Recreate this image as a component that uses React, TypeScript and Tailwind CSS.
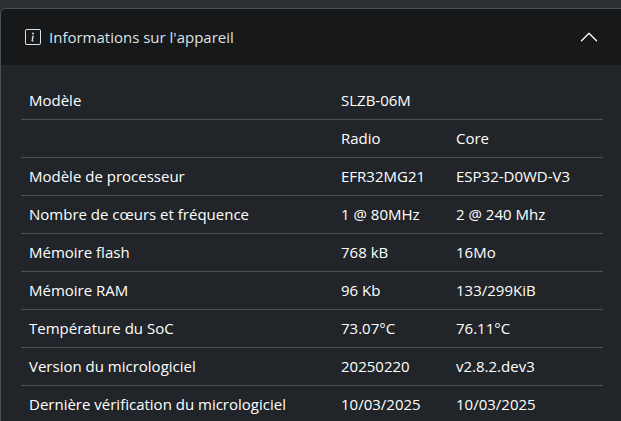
import { BsChevronUp, BsInfoSquare } from "react-icons/bs";

interface DeviceRow {
  label: string;
  radio: string;
  core: string;
}

const rows: DeviceRow[] = [
  { label: "Modèle", radio: "SLZB-06M", core: "" },
  { label: "", radio: "Radio", core: "Core" },
  { label: "Modèle de processeur", radio: "EFR32MG21", core: "ESP32-D0WD-V3" },
  { label: "Nombre de cœurs et fréquence", radio: "1 @ 80MHz", core: "2 @ 240 Mhz" },
  { label: "Mémoire flash", radio: "768 kB", core: "16Mo" },
  { label: "Mémoire RAM", radio: "96 Kb", core: "133/299KiB" },
  { label: "Température du SoC", radio: "73.07°C", core: "76.11°C" },
  { label: "Version du micrologiciel", radio: "20250220", core: "v2.8.2.dev3" },
  { label: "Dernière vérification du micrologiciel", radio: "10/03/2025", core: "10/03/2025" },
];

export default function App() {
  return (
    <main className="min-h-screen bg-[#2b3035] pt-2 font-['Open_Sans','Noto_Sans',sans-serif] text-[15px] text-white">
      <section className="overflow-hidden rounded-tl-md border-t border-l border-[#495057] bg-[#212529]">
        <h2>
          <button type="button" aria-expanded="true" className="flex h-14 w-full items-center gap-2 bg-[#16181a] pr-[22px] pl-6 text-left text-[#dee2e6]">
            <BsInfoSquare className="size-4" />
            <span className="flex-1">Informations sur l'appareil</span>
            <BsChevronUp className="size-5 text-white" />
          </button>
        </h2>
        <div className="pt-4 pr-[18px] pl-5">
          <table className="w-full table-fixed border-collapse text-left">
            <colgroup>
              <col />
              <col className="w-[115px]" />
              <col className="w-[155px]" />
            </colgroup>
            <tbody>
              {rows.map((row) => (
                <tr key={row.radio + row.label} className="h-[38px] border-b border-[#495057]">
                  <th scope="row" className="px-2 font-normal whitespace-nowrap">{row.label}</th>
                  <td className="px-2 whitespace-nowrap">{row.radio}</td>
                  <td className="px-2 whitespace-nowrap">{row.core}</td>
                </tr>
              ))}
            </tbody>
          </table>
        </div>
      </section>
    </main>
  );
}
